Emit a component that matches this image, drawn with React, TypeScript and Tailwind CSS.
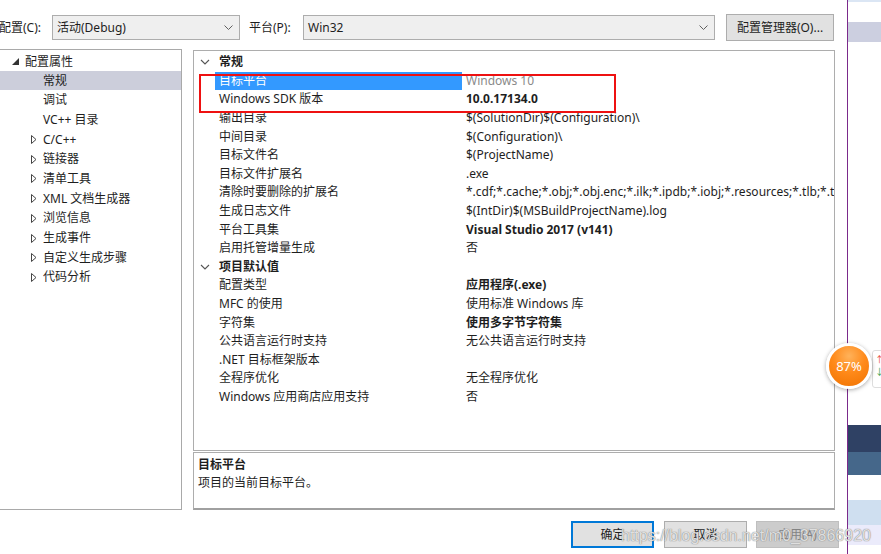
import React from "react";

const font = { fontFamily: '"Noto Sans", "Noto Sans CJK SC", sans-serif' };

function Chevron() {
  return (
    <svg width="10" height="6" viewBox="0 0 10 6" className="shrink-0">
      <path d="M1 1 L5 5 L9 1" fill="none" stroke="#555" strokeWidth="1.1" />
    </svg>
  );
}

function TreeItem({ label, expandable, selected }: { label: string; expandable?: boolean; selected?: boolean }) {
  return (
    <div className={`h-[19.7px] flex items-center ${selected ? "bg-[#cccedb]" : ""}`}>
      <div className="w-[31px] shrink-0" />
      <div className="w-[12px] shrink-0 flex items-center">
        {expandable && (
          <svg width="6" height="9" viewBox="0 0 6 9">
            <path d="M0.5 0.5 L5 4.5 L0.5 8.5 Z" fill="none" stroke="#444" strokeWidth="1" />
          </svg>
        )}
      </div>
      <span className="text-[12px] text-[#1e1e1e] leading-[18px]">{label}</span>
    </div>
  );
}

type Row = { name: string; value?: string; bold?: boolean; cat?: boolean; sel?: boolean; gray?: boolean };

const rows: Row[] = [
  { name: "常规", cat: true },
  { name: "目标平台", value: "Windows 10", sel: true, gray: true },
  { name: "Windows SDK 版本", value: "10.0.17134.0", bold: true },
  { name: "输出目录", value: "$(SolutionDir)$(Configuration)\\" },
  { name: "中间目录", value: "$(Configuration)\\" },
  { name: "目标文件名", value: "$(ProjectName)" },
  { name: "目标文件扩展名", value: ".exe" },
  { name: "清除时要删除的扩展名", value: "*.cdf;*.cache;*.obj;*.obj.enc;*.ilk;*.ipdb;*.iobj;*.resources;*.tlb;*.tli;*.t" },
  { name: "生成日志文件", value: "$(IntDir)$(MSBuildProjectName).log" },
  { name: "平台工具集", value: "Visual Studio 2017 (v141)", bold: true },
  { name: "启用托管增量生成", value: "否" },
  { name: "项目默认值", cat: true },
  { name: "配置类型", value: "应用程序(.exe)", bold: true },
  { name: "MFC 的使用", value: "使用标准 Windows 库" },
  { name: "字符集", value: "使用多字节字符集", bold: true },
  { name: "公共语言运行时支持", value: "无公共语言运行时支持" },
  { name: ".NET 目标框架版本", value: "" },
  { name: "全程序优化", value: "无全程序优化" },
  { name: "Windows 应用商店应用支持", value: "否" },
];

function GridRow({ r }: { r: Row }) {
  if (r.cat) {
    return (
      <div className="h-[18.6px] flex items-center">
        <div className="w-[25px] shrink-0 flex justify-start pl-[6px]">
          <Chevron />
        </div>
        <span className="text-[12px] font-bold text-[#1e1e1e] leading-[18px]">{r.name}</span>
      </div>
    );
  }
  return (
    <div className="h-[18.6px] flex items-center">
      <div className="w-[21px] shrink-0" />
      <div className={`w-[247px] shrink-0 h-full flex items-center pl-[4px] ${r.sel ? "bg-[#3399ff] text-white" : "text-[#1e1e1e]"}`}>
        <span className="text-[12px] leading-[18px] whitespace-nowrap">{r.name}</span>
      </div>
      <div className="flex-1 min-w-0 pl-[4px] flex items-center">
        <span className={`text-[12px] leading-[18px] whitespace-nowrap ${r.bold ? "font-bold" : ""} ${r.gray ? "text-[#8a8a8a]" : "text-[#1e1e1e]"}`}>
          {r.value}
        </span>
      </div>
    </div>
  );
}

function Select({ w, text }: { w: string; text: string }) {
  return (
    <div className={`${w} h-[25px] border border-[#adadad] bg-[#efefef] flex items-center justify-between pl-[4px] pr-[6px]`}>
      <span className="text-[12px] text-[#1e1e1e]">{text}</span>
      <svg width="9" height="5" viewBox="0 0 9 5">
        <path d="M0.5 0.5 L4.5 4.5 L8.5 0.5" fill="none" stroke="#606060" strokeWidth="1" />
      </svg>
    </div>
  );
}

export default function App() {
  return (
    <div className="w-[881px] h-[554px] relative overflow-hidden bg-white flex" style={font}>
      <div className="w-[847px] shrink-0 flex flex-col">
        {/* top row */}
        <div className="h-[27px] mt-[14px] flex items-center">
          <span className="text-[12px] text-[#1e1e1e] w-[53px] -ml-[1px]">配置(C):</span>
          <Select w="w-[188px]" text="活动(Debug)" />
          <span className="text-[12px] text-[#1e1e1e] ml-[9px] w-[54px]">平台(P):</span>
          <Select w="w-[412px]" text="Win32" />
          <div className="ml-[11px] w-[108px] h-[27px] border border-[#adadad] bg-[#e1e1e1] flex items-center justify-center">
            <span className="text-[12px] text-[#1e1e1e]">配置管理器(O)...</span>
          </div>
        </div>

        {/* panels */}
        <div className="flex mt-[8px]">
          <div className="w-[182px] h-[461px] border-t border-r border-b border-[#a9a9a9] pt-[2px]">
            <div className="h-[19.7px] flex items-center">
              <div className="w-[12px] shrink-0" />
              <svg width="7" height="7" viewBox="0 0 7 7" className="shrink-0">
                <path d="M7 0 L7 7 L0 7 Z" fill="#333" />
              </svg>
              <span className="ml-[6px] text-[12px] text-[#1e1e1e] leading-[18px]">配置属性</span>
            </div>
            <div className="-mt-[1px]">
              <TreeItem label="常规" selected />
              <TreeItem label="调试" />
              <TreeItem label="VC++ 目录" />
              <TreeItem label="C/C++" expandable />
              <TreeItem label="链接器" expandable />
              <TreeItem label="清单工具" expandable />
              <TreeItem label="XML 文档生成器" expandable />
              <TreeItem label="浏览信息" expandable />
              <TreeItem label="生成事件" expandable />
              <TreeItem label="自定义生成步骤" expandable />
              <TreeItem label="代码分析" expandable />
            </div>
          </div>

          <div className="ml-[11px] w-[642px] flex flex-col">
            <div className="h-[401px] border border-[#adadad] mt-[1px] pt-[2px] overflow-hidden">
              {rows.map((r, i) => (
                <GridRow key={i} r={r} />
              ))}
            </div>
            <div className="h-[58px] mt-[1px] border border-[#adadad] border-b-2 border-b-[#a0a0a0] px-[4px] pt-[3px]">
              <div className="text-[12px] font-bold text-[#1e1e1e] leading-[18px]">目标平台</div>
              <div className="text-[12px] text-[#1e1e1e] leading-[18px]">项目的当前目标平台。</div>
            </div>
          </div>
        </div>

        {/* buttons */}
        <div className="flex mt-[11px] ml-[571px]">
          <div className="w-[83px] h-[27px] border-2 border-[#0078d7] bg-[#e1e1e1] flex items-center justify-center">
            <span className="text-[12px] text-[#1e1e1e]">确定</span>
          </div>
          <div className="ml-[10px] w-[83px] h-[27px] border border-[#adadad] bg-[#e1e1e1] flex items-center justify-center">
            <span className="text-[12px] text-[#1e1e1e]">取消</span>
          </div>
          <div className="ml-[9px] w-[83px] h-[27px] border border-[#bfbfbf] bg-[#cccccc] flex items-center justify-center">
            <span className="text-[12px] text-[#838383]">应用(A)</span>
          </div>
        </div>
      </div>

      {/* right strip */}
      <div className="flex-1 border-l border-[#7b2a8b] flex flex-col">
        <div className="h-[2px] bg-[#dbe6f4]" />
        <div className="h-[20px]" />
        <div className="h-[20px] bg-[#cccfe0]" />
        <div className="h-[383px]" />
        <div className="h-[27px] bg-[#2f4164]" />
        <div className="h-[23px] bg-[#45678a]" />
        <div className="h-[25px]" />
        <div className="h-[25px] bg-[#cfdff0]" />
        <div className="h-[20px] bg-[#ebebfb]" />
      </div>

      {/* red annotation */}
      <div className="absolute left-[199px] top-[74px] w-[417px] h-[39px] border-2 border-[#ee1111] pointer-events-none" />

      {/* 87% badge */}
      <div className="absolute left-[872px] top-[350px] w-[20px] h-[38px] bg-white border border-[#dddddd] rounded-[3px] flex flex-col items-start pl-[2px] pt-[3px]">
        <span className="text-[9px] leading-[12px] text-[#e84c3d]">↑</span>
        <span className="text-[9px] leading-[12px] text-[#2e9e44]">↓</span>
      </div>
      <div
        className="absolute left-[826px] top-[343px] w-[46px] h-[46px] rounded-full border-[3px] border-white flex items-center justify-center shadow-[0_1px_4px_rgba(0,0,0,0.35)]"
        style={{ background: "radial-gradient(circle at 50% 25%, #ffb25a 0%, #ff8a1a 45%, #f07200 100%)" }}
      >
        <span className="text-[13px] text-white leading-none">87%</span>
      </div>

      {/* watermark */}
      <div
        className="absolute left-[621px] top-[526px] text-[16px] leading-[20px] whitespace-nowrap text-[rgba(255,255,255,0.75)] pointer-events-none"
        style={{ fontFamily: '"Liberation Sans", sans-serif', textShadow: "0 0 1px rgba(120,120,120,0.8), 0 0 1px rgba(120,120,120,0.8)" }}
      >
        https://blog.csdn.net/m0_37866920
      </div>
    </div>
  );
}
